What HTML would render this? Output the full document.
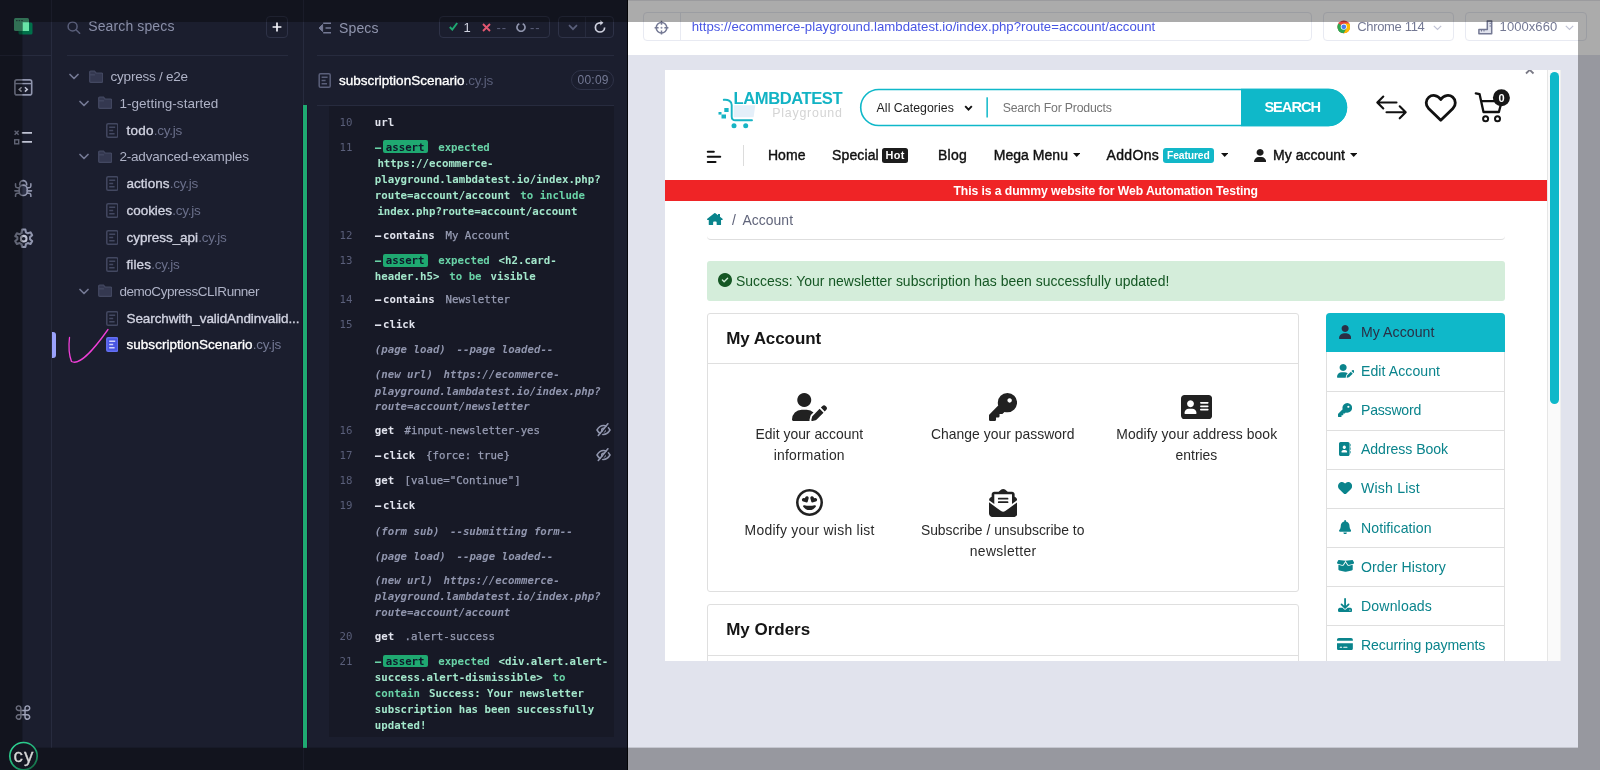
<!DOCTYPE html>
<html lang="en"><head><meta charset="utf-8"><title>Cypress - subscriptionScenario.cy.js</title>
<style>
*{box-sizing:border-box;margin:0;padding:0}
html,body{width:1600px;height:770px;overflow:hidden;background:#1b1e2e}
body{font-family:"Liberation Sans",sans-serif;}
#root{will-change:transform;position:relative;width:1600px;height:770px;overflow:hidden;background:#1b1e2e}
#root div,#root span.t,#root svg{position:absolute}
span.t{white-space:pre;display:block}
.m{font-family:"DejaVu Sans Mono","Liberation Mono",monospace}

</style></head>
<body>
<div id="root">
<div style="left:0px;top:0px;width:52px;height:770px;background:#1b1e2e;"></div>
<div style="left:51px;top:0px;width:1px;height:748px;background:#272b3e;"></div>
<div style="left:0px;top:55px;width:51px;height:1px;background:#272b3e;"></div>
<svg style="left:14px;top:18px;" width="19" height="17" viewBox="0 0 19 17">
<rect x="4.5" y="4.5" width="14" height="12" rx="1.5" fill="#00714a"/>
<rect x="0" y="0" width="15" height="13" rx="1.5" fill="#4aa67e"/>
<rect x="9" y="4.5" width="6" height="8.5" fill="#69e3a7"/>
<rect x="2" y="2" width="1.6" height="1.2" fill="#1b1e2e" opacity=".6"/><rect x="4.6" y="2" width="1.6" height="1.2" fill="#1b1e2e" opacity=".6"/><rect x="7.2" y="2" width="1.6" height="1.2" fill="#1b1e2e" opacity=".6"/>
</svg>
<svg style="left:14px;top:79px;" width="19" height="17" viewBox="0 0 19 17">
<rect x="0.9" y="0.9" width="16.8" height="15" rx="2" fill="none" stroke="#9095ad" stroke-width="1.6"/>
<path d="M1 4.6H17.5" stroke="#9095ad" stroke-width="1.4"/>
<path d="M7.6 8.2 5.2 10.4 7.6 12.6M10.9 8.2 13.3 10.4 10.9 12.6" fill="none" stroke="#c0c3d4" stroke-width="1.5"/>
</svg>
<svg style="left:14px;top:130px;" width="19" height="16" viewBox="0 0 19 16">
<path d="M0.6 0.8 4.6 4.8M4.6 0.8 0.6 4.8" stroke="#9095ad" stroke-width="1.4"/>
<rect x="0.7" y="9.8" width="4" height="4" fill="none" stroke="#9095ad" stroke-width="1.4"/>
<path d="M7.8 2.8H18M7.8 11.8H18" stroke="#c0c3d4" stroke-width="1.7"/>
</svg>
<svg style="left:14.3px;top:178.8px;" width="18.4" height="18.2" viewBox="0 0 19 19">
<path d="M5.900 6.800V5.300a3.600 3.600 0 0 1 7.200 0V6.800" fill="none" stroke="#9095ad" stroke-width="1.700"/>
<rect x="5.300" y="6.400" width="8.400" height="10.800" rx="4" fill="#2e3247" stroke="#9095ad" stroke-width="1.700"/>
<path d="M5.300 9.200H3.300Q1.500 9.200 1.500 7.400V5M5.300 12.400H0.800M5.300 15H3.600Q1.600 15 1.500 17V18.200M13.700 9.200H15.700Q17.500 9.200 17.500 7.400V5M13.700 12.400H18.200M13.700 15H15.400Q17.400 15 17.500 17V18.200" fill="none" stroke="#9095ad" stroke-width="1.600" stroke-linecap="round"/>
</svg>
<svg style="left:11.7px;top:226.6px;" width="23.4" height="23.4" viewBox="0 0 24 24">
<path d="M10.300 2.500h3.400l.6 2.900 1.900 1.100 2.800-1 1.700 3-2.200 1.900v2.200l2.200 1.900-1.700 3-2.800-1-1.900 1.100-.6 2.900h-3.400l-.6-2.900-1.900-1.100-2.800 1-1.700-3 2.200-1.900v-2.200L3.300 9.500l1.700-3 2.800 1 1.900-1.100z" fill="none" stroke="#9095ad" stroke-width="2.100" stroke-linejoin="round"/>
<circle cx="12" cy="12" r="2.900" fill="none" stroke="#c0c3d4" stroke-width="2.100"/>
</svg>
<span class="t" style="left:13.20px;top:700.50px;font-size:19.5px;line-height:25px;color:#9ea2b8;font-family:'DejaVu Sans','Liberation Sans',sans-serif;">⌘</span>
<div style="left:52px;top:0px;width:251px;height:770px;background:#1b1e2e;"></div>
<div style="left:303px;top:0px;width:1px;height:770px;background:#272b3e;"></div>
<div style="left:67px;top:55px;width:221px;height:1px;background:#272b3e;"></div>
<svg style="left:67px;top:20.5px;" width="14" height="13" viewBox="0 0 14 13"><circle cx="5.6" cy="5.4" r="4.5" fill="none" stroke="#5a5f7a" stroke-width="1.5"/><path d="M9 8.8 12.6 12.3" stroke="#5a5f7a" stroke-width="1.6" stroke-linecap="round"/></svg>
<span class="t" style="left:88.20px;top:17.30px;font-size:14px;line-height:18px;color:#8a8fa8;letter-spacing:0.125px;">Search specs</span>
<div style="left:266px;top:16px;width:22px;height:22px;border:1px solid #2e3247;border-radius:4px;"></div>
<svg style="left:272px;top:22px" width="10" height="10" viewBox="0 0 10 10"><path d="M5 0.6V9.4M0.6 5H9.4" stroke="#f3f4fa" stroke-width="1.7"/></svg>
<svg style="left:69px;top:72.9px;" width="10" height="7" viewBox="0 0 10 7"><path d="M1 1.5 5 5.5 9 1.5" fill="none" stroke="#747994" stroke-width="1.7" stroke-linecap="round" stroke-linejoin="round"/></svg>
<svg style="left:88.7px;top:69.60000000000001px;" width="14.4" height="13.3" viewBox="0 0 14.4 13.3"><path d="M0.7 2.2V11.3a1 1 0 0 0 1 1H12.700a1 1 0 0 0 1-1V4.2a1 1 0 0 0-1-1H7.200L5.500 1.200H1.700a1 1 0 0 0-1 1z" fill="#343850" stroke="#434861" stroke-width="1.3"/><path d="M0.7 4.8H6" stroke="#434861" stroke-width="1.3"/></svg>
<span class="t" style="left:110.60px;top:67.90px;font-size:13.5px;line-height:18px;color:#afb3c7;letter-spacing:-0.241px;">cypress / e2e</span>
<svg style="left:78.5px;top:99.75px;" width="10" height="7" viewBox="0 0 10 7"><path d="M1 1.5 5 5.5 9 1.5" fill="none" stroke="#747994" stroke-width="1.7" stroke-linecap="round" stroke-linejoin="round"/></svg>
<svg style="left:97.5px;top:96.45px;" width="14.4" height="13.3" viewBox="0 0 14.4 13.3"><path d="M0.7 2.2V11.3a1 1 0 0 0 1 1H12.700a1 1 0 0 0 1-1V4.2a1 1 0 0 0-1-1H7.200L5.500 1.200H1.700a1 1 0 0 0-1 1z" fill="#343850" stroke="#434861" stroke-width="1.3"/><path d="M0.7 4.8H6" stroke="#434861" stroke-width="1.3"/></svg>
<span class="t" style="left:119.40px;top:94.75px;font-size:13.5px;line-height:18px;color:#afb3c7;letter-spacing:0.043px;">1-getting-started</span>
<svg style="left:105.5px;top:122.60000000000002px;" width="12.6" height="15" viewBox="0 0 12.6 15"><rect x="0.8" y="0.8" width="11" height="13.400" rx="1.3" fill="#1b1e2e" stroke="#434861" stroke-width="1.5"/><path d="M3.200 4.300H9.200M3.200 7.500H7.200M3.200 10.700H8.600" stroke="#434861" stroke-width="1.4"/></svg>
<span class="t" style="left:126.50px;top:121.60px;font-size:13.5px;line-height:18px;color:#d0d2e0;-webkit-text-stroke:0.35px #d0d2e0;letter-spacing:0.240px;">todo</span>
<span class="t" style="left:153.80px;top:121.60px;font-size:13.5px;line-height:18px;color:#6a6f8a;letter-spacing:-0.250px;">.cy.js</span>
<svg style="left:78.5px;top:153.45000000000002px;" width="10" height="7" viewBox="0 0 10 7"><path d="M1 1.5 5 5.5 9 1.5" fill="none" stroke="#747994" stroke-width="1.7" stroke-linecap="round" stroke-linejoin="round"/></svg>
<svg style="left:97.5px;top:150.15px;" width="14.4" height="13.3" viewBox="0 0 14.4 13.3"><path d="M0.7 2.2V11.3a1 1 0 0 0 1 1H12.700a1 1 0 0 0 1-1V4.2a1 1 0 0 0-1-1H7.200L5.500 1.200H1.700a1 1 0 0 0-1 1z" fill="#343850" stroke="#434861" stroke-width="1.3"/><path d="M0.7 4.8H6" stroke="#434861" stroke-width="1.3"/></svg>
<span class="t" style="left:119.40px;top:148.45px;font-size:13.5px;line-height:18px;color:#afb3c7;letter-spacing:-0.185px;">2-advanced-examples</span>
<svg style="left:105.5px;top:176.3px;" width="12.6" height="15" viewBox="0 0 12.6 15"><rect x="0.8" y="0.8" width="11" height="13.400" rx="1.3" fill="#1b1e2e" stroke="#434861" stroke-width="1.5"/><path d="M3.200 4.300H9.200M3.200 7.500H7.200M3.200 10.700H8.600" stroke="#434861" stroke-width="1.4"/></svg>
<span class="t" style="left:126.50px;top:175.30px;font-size:13.5px;line-height:18px;color:#d0d2e0;-webkit-text-stroke:0.35px #d0d2e0;letter-spacing:0.036px;">actions</span>
<span class="t" style="left:169.80px;top:175.30px;font-size:13.5px;line-height:18px;color:#6a6f8a;letter-spacing:-0.250px;">.cy.js</span>
<svg style="left:105.5px;top:203.15px;" width="12.6" height="15" viewBox="0 0 12.6 15"><rect x="0.8" y="0.8" width="11" height="13.400" rx="1.3" fill="#1b1e2e" stroke="#434861" stroke-width="1.5"/><path d="M3.200 4.300H9.200M3.200 7.500H7.200M3.200 10.700H8.600" stroke="#434861" stroke-width="1.4"/></svg>
<span class="t" style="left:126.50px;top:202.15px;font-size:13.5px;line-height:18px;color:#d0d2e0;-webkit-text-stroke:0.35px #d0d2e0;letter-spacing:-0.047px;">cookies</span>
<span class="t" style="left:172.30px;top:202.15px;font-size:13.5px;line-height:18px;color:#6a6f8a;letter-spacing:-0.250px;">.cy.js</span>
<svg style="left:105.5px;top:230.00000000000003px;" width="12.6" height="15" viewBox="0 0 12.6 15"><rect x="0.8" y="0.8" width="11" height="13.400" rx="1.3" fill="#1b1e2e" stroke="#434861" stroke-width="1.5"/><path d="M3.200 4.300H9.200M3.200 7.500H7.200M3.200 10.700H8.600" stroke="#434861" stroke-width="1.4"/></svg>
<span class="t" style="left:126.50px;top:229.00px;font-size:13.5px;line-height:18px;color:#d0d2e0;-webkit-text-stroke:0.35px #d0d2e0;letter-spacing:-0.055px;">cypress_api</span>
<span class="t" style="left:198.30px;top:229.00px;font-size:13.5px;line-height:18px;color:#6a6f8a;letter-spacing:-0.250px;">.cy.js</span>
<svg style="left:105.5px;top:256.85px;" width="12.6" height="15" viewBox="0 0 12.6 15"><rect x="0.8" y="0.8" width="11" height="13.400" rx="1.3" fill="#1b1e2e" stroke="#434861" stroke-width="1.5"/><path d="M3.200 4.300H9.200M3.200 7.500H7.200M3.200 10.700H8.600" stroke="#434861" stroke-width="1.4"/></svg>
<span class="t" style="left:126.50px;top:255.85px;font-size:13.5px;line-height:18px;color:#d0d2e0;-webkit-text-stroke:0.35px #d0d2e0;letter-spacing:0.121px;">files</span>
<span class="t" style="left:151.30px;top:255.85px;font-size:13.5px;line-height:18px;color:#6a6f8a;letter-spacing:-0.250px;">.cy.js</span>
<svg style="left:78.5px;top:287.70000000000005px;" width="10" height="7" viewBox="0 0 10 7"><path d="M1 1.5 5 5.5 9 1.5" fill="none" stroke="#747994" stroke-width="1.7" stroke-linecap="round" stroke-linejoin="round"/></svg>
<svg style="left:97.5px;top:284.40000000000003px;" width="14.4" height="13.3" viewBox="0 0 14.4 13.3"><path d="M0.7 2.2V11.3a1 1 0 0 0 1 1H12.700a1 1 0 0 0 1-1V4.2a1 1 0 0 0-1-1H7.200L5.500 1.200H1.700a1 1 0 0 0-1 1z" fill="#343850" stroke="#434861" stroke-width="1.3"/><path d="M0.7 4.8H6" stroke="#434861" stroke-width="1.3"/></svg>
<span class="t" style="left:119.40px;top:282.70px;font-size:13.5px;line-height:18px;color:#afb3c7;letter-spacing:-0.451px;">demoCypressCLIRunner</span>
<svg style="left:105.5px;top:310.55px;" width="12.6" height="15" viewBox="0 0 12.6 15"><rect x="0.8" y="0.8" width="11" height="13.400" rx="1.3" fill="#1b1e2e" stroke="#434861" stroke-width="1.5"/><path d="M3.200 4.300H9.200M3.200 7.500H7.200M3.200 10.700H8.600" stroke="#434861" stroke-width="1.4"/></svg>
<span class="t" style="left:126.50px;top:309.55px;font-size:13.5px;line-height:18px;color:#d0d2e0;-webkit-text-stroke:0.35px #d0d2e0;letter-spacing:-0.093px;">Searchwith_validAndinvalid...</span>
<svg style="left:105.5px;top:337.4px;" width="12.6" height="15" viewBox="0 0 12.6 15"><rect x="0.8" y="0.8" width="11" height="13.400" rx="1.3" fill="#4956e3" stroke="#6470f3" stroke-width="1.5"/><path d="M3.200 4.300H9.200M3.200 7.500H7.200M3.200 10.700H8.600" stroke="#d0d2fc" stroke-width="1.4"/></svg>
<span class="t" style="left:126.50px;top:336.40px;font-size:13.5px;line-height:18px;color:#ffffff;-webkit-text-stroke:0.35px #ffffff;letter-spacing:0.035px;">subscriptionScenario</span>
<span class="t" style="left:252.80px;top:336.40px;font-size:13.5px;line-height:18px;color:#747994;letter-spacing:-0.250px;">.cy.js</span>
<div style="left:52px;top:332px;width:3.5px;height:26px;background:#9aa2fc;border-radius:0 3px 3px 0;"></div>
<svg style="left:64px;top:324px" width="50" height="44" viewBox="0 0 50 44"><path d="M5.500 13.500C4.500 22 5 31 7.500 37.500 15 41.500 27 29.500 44 5.500" fill="none" stroke="#f03fd8" stroke-width="1.3" stroke-linecap="round"/></svg>
<div style="left:304px;top:0px;width:324px;height:770px;background:#1b1e2e;"></div>
<div style="left:317px;top:55px;width:297px;height:1px;background:#272b3e;"></div>
<div style="left:317px;top:105px;width:297px;height:1px;background:#272b3e;"></div>
<div style="left:302px;top:105px;width:6px;height:643px;background:#1d0f2b;"></div>
<div style="left:303px;top:105px;width:4px;height:643px;background:#1fa971;"></div>
<div style="left:329px;top:106px;width:285px;height:631px;background:#171926;"></div>
<svg style="left:318px;top:22px" width="14" height="12" viewBox="0 0 14 12"><path d="M5.200 1.200H13M7.500 6H13M5.200 10.800H13" stroke="#747994" stroke-width="1.6"/><path d="M4.600 2.500 1 6 4.600 9.500z" fill="#747994" stroke="#747994" stroke-width="1" stroke-linejoin="round"/></svg>
<span class="t" style="left:339.00px;top:18.60px;font-size:14px;line-height:18px;color:#9095ad;letter-spacing:0.145px;">Specs</span>
<div style="left:439px;top:16px;width:111px;height:22px;border:1px solid #2e3247;border-radius:4px;"></div>
<svg style="left:449px;top:22px" width="9" height="9" viewBox="0 0 9 9"><path d="M0.8 5 3.300 7.600 8.200 1" fill="none" stroke="#1fa971" stroke-width="1.9"/></svg>
<span class="t" style="left:463.50px;top:19.00px;font-size:13px;line-height:17px;color:#d0d2e0;letter-spacing:0.000px;">1</span>
<svg style="left:482px;top:22.500px" width="9" height="9" viewBox="0 0 9 9"><path d="M1 1 8 8M8 1 1 8" fill="none" stroke="#e45770" stroke-width="1.9"/></svg>
<span class="t" style="left:496.50px;top:18.50px;font-size:13px;line-height:17px;color:#5a5f7a;letter-spacing:0.828px;">--</span>
<svg style="left:515.500px;top:22px" width="10" height="10" viewBox="0 0 10 10"><path d="M3.300 1.700A4 4 0 1 0 6.700 1.700" fill="none" stroke="#9095ad" stroke-width="1.7"/></svg>
<span class="t" style="left:530.00px;top:18.50px;font-size:13px;line-height:17px;color:#5a5f7a;letter-spacing:0.828px;">--</span>
<div style="left:558px;top:16px;width:56px;height:22px;border:1px solid #2e3247;border-radius:4px;"></div>
<div style="left:585px;top:17px;width:1px;height:20px;background:#272b3e;"></div>
<svg style="left:567.500px;top:24px" width="10" height="7" viewBox="0 0 10 7"><path d="M1 1.200 5 5.200 9 1.200" fill="none" stroke="#5a5f7a" stroke-width="1.7"/></svg>
<svg style="left:593px;top:19.500px" width="14" height="14" viewBox="0 0 14 14"><path d="M11.600 7.400A4.600 4.600 0 1 1 7 2.800H8.500" fill="none" stroke="#d0d2e0" stroke-width="1.7"/><path d="M7.300 0 10.400 2.800 7.300 5.600z" fill="#d0d2e0"/></svg>
<svg style="left:318px;top:72.5px;" width="13.4" height="15" viewBox="0 0 12.6 15"><rect x="0.8" y="0.8" width="11" height="13.400" rx="1.3" fill="#1b1e2e" stroke="#5a5f7a" stroke-width="1.5"/><path d="M3.200 4.300H9.200M3.200 7.500H7.200M3.200 10.700H8.600" stroke="#5a5f7a" stroke-width="1.4"/></svg>
<span class="t" style="left:339.00px;top:71.60px;font-size:13.5px;line-height:18px;color:#ffffff;-webkit-text-stroke:0.35px #ffffff;letter-spacing:0.009px;">subscriptionScenario</span>
<span class="t" style="left:464.80px;top:71.60px;font-size:13.5px;line-height:18px;color:#5a5f7a;letter-spacing:-0.250px;">.cy.js</span>
<div style="left:571px;top:70px;width:43px;height:20px;border:1px solid #2e3247;border-radius:10px;"></div>
<span class="t" style="left:577.50px;top:72.40px;font-size:12px;line-height:16px;color:#747994;letter-spacing:0.242px;">00:09</span>
<span class="t" style="left:339.50px;top:115.50px;font-size:10.73px;line-height:14px;color:#5a5f7a;font-family:'DejaVu Sans Mono','Liberation Mono',monospace;">10</span>
<span class="t" style="left:374.80px;top:115.50px;font-size:10.73px;line-height:14px;color:#e1e3ed;font-family:'DejaVu Sans Mono','Liberation Mono',monospace;font-weight:700;">url</span>
<span class="t" style="left:339.50px;top:140.60px;font-size:10.73px;line-height:14px;color:#5a5f7a;font-family:'DejaVu Sans Mono','Liberation Mono',monospace;">11</span>
<span class="t" style="left:371.60px;top:140.60px;font-size:10.73px;line-height:14px;color:#69d3a7;font-family:'DejaVu Sans Mono','Liberation Mono',monospace;font-weight:700;transform:scaleX(1.880);transform-origin:0 50%;">-</span>
<div style="left:382.5px;top:140.4px;width:45.2px;height:12.8px;background:#1fa971;border-radius:2px;"></div>
<span class="t" style="left:385.80px;top:140.60px;font-size:10.73px;line-height:14px;color:#10172a;font-family:'DejaVu Sans Mono','Liberation Mono',monospace;font-weight:700;">assert</span>
<span class="t" style="left:438.20px;top:140.60px;font-size:10.73px;line-height:14px;color:#69d3a7;font-family:'DejaVu Sans Mono','Liberation Mono',monospace;font-weight:700;">expected</span>
<span class="t" style="left:377.40px;top:157.00px;font-size:10.73px;line-height:14px;color:#a3e7cb;font-family:'DejaVu Sans Mono','Liberation Mono',monospace;font-weight:700;">https://ecommerce-</span>
<span class="t" style="left:374.80px;top:173.10px;font-size:10.73px;line-height:14px;color:#a3e7cb;font-family:'DejaVu Sans Mono','Liberation Mono',monospace;font-weight:700;">playground.lambdatest.io/index.php?</span>
<span class="t" style="left:374.80px;top:189.10px;font-size:10.73px;line-height:14px;color:#a3e7cb;font-family:'DejaVu Sans Mono','Liberation Mono',monospace;font-weight:700;">route=account/account</span>
<span class="t" style="left:520.30px;top:189.10px;font-size:10.73px;line-height:14px;color:#69d3a7;font-family:'DejaVu Sans Mono','Liberation Mono',monospace;font-weight:700;">to include</span>
<span class="t" style="left:377.40px;top:205.20px;font-size:10.73px;line-height:14px;color:#a3e7cb;font-family:'DejaVu Sans Mono','Liberation Mono',monospace;font-weight:700;">index.php?route=account/account</span>
<span class="t" style="left:339.50px;top:228.60px;font-size:10.73px;line-height:14px;color:#5a5f7a;font-family:'DejaVu Sans Mono','Liberation Mono',monospace;">12</span>
<span class="t" style="left:371.60px;top:228.60px;font-size:10.73px;line-height:14px;color:#e1e3ed;font-family:'DejaVu Sans Mono','Liberation Mono',monospace;font-weight:700;transform:scaleX(1.880);transform-origin:0 50%;">-</span>
<span class="t" style="left:383.00px;top:228.60px;font-size:10.73px;line-height:14px;color:#e1e3ed;font-family:'DejaVu Sans Mono','Liberation Mono',monospace;font-weight:700;">contains</span>
<span class="t" style="left:445.50px;top:228.60px;font-size:10.73px;line-height:14px;color:#989db4;font-family:'DejaVu Sans Mono','Liberation Mono',monospace;-webkit-text-stroke:0.25px #989db4;">My Account</span>
<span class="t" style="left:339.50px;top:254.00px;font-size:10.73px;line-height:14px;color:#5a5f7a;font-family:'DejaVu Sans Mono','Liberation Mono',monospace;">13</span>
<span class="t" style="left:371.60px;top:254.00px;font-size:10.73px;line-height:14px;color:#69d3a7;font-family:'DejaVu Sans Mono','Liberation Mono',monospace;font-weight:700;transform:scaleX(1.880);transform-origin:0 50%;">-</span>
<div style="left:382.5px;top:253.8px;width:45.2px;height:12.8px;background:#1fa971;border-radius:2px;"></div>
<span class="t" style="left:385.80px;top:254.00px;font-size:10.73px;line-height:14px;color:#10172a;font-family:'DejaVu Sans Mono','Liberation Mono',monospace;font-weight:700;">assert</span>
<span class="t" style="left:438.20px;top:254.00px;font-size:10.73px;line-height:14px;color:#69d3a7;font-family:'DejaVu Sans Mono','Liberation Mono',monospace;font-weight:700;">expected</span>
<span class="t" style="left:498.60px;top:254.00px;font-size:10.73px;line-height:14px;color:#a3e7cb;font-family:'DejaVu Sans Mono','Liberation Mono',monospace;font-weight:700;">&lt;h2.card-</span>
<span class="t" style="left:374.80px;top:269.60px;font-size:10.73px;line-height:14px;color:#a3e7cb;font-family:'DejaVu Sans Mono','Liberation Mono',monospace;font-weight:700;">header.h5&gt;</span>
<span class="t" style="left:449.30px;top:269.60px;font-size:10.73px;line-height:14px;color:#69d3a7;font-family:'DejaVu Sans Mono','Liberation Mono',monospace;font-weight:700;">to be</span>
<span class="t" style="left:490.50px;top:269.60px;font-size:10.73px;line-height:14px;color:#a3e7cb;font-family:'DejaVu Sans Mono','Liberation Mono',monospace;font-weight:700;">visible</span>
<span class="t" style="left:339.50px;top:293.00px;font-size:10.73px;line-height:14px;color:#5a5f7a;font-family:'DejaVu Sans Mono','Liberation Mono',monospace;">14</span>
<span class="t" style="left:371.60px;top:293.00px;font-size:10.73px;line-height:14px;color:#e1e3ed;font-family:'DejaVu Sans Mono','Liberation Mono',monospace;font-weight:700;transform:scaleX(1.880);transform-origin:0 50%;">-</span>
<span class="t" style="left:383.00px;top:293.00px;font-size:10.73px;line-height:14px;color:#e1e3ed;font-family:'DejaVu Sans Mono','Liberation Mono',monospace;font-weight:700;">contains</span>
<span class="t" style="left:445.50px;top:293.00px;font-size:10.73px;line-height:14px;color:#989db4;font-family:'DejaVu Sans Mono','Liberation Mono',monospace;-webkit-text-stroke:0.25px #989db4;">Newsletter</span>
<span class="t" style="left:339.50px;top:318.20px;font-size:10.73px;line-height:14px;color:#5a5f7a;font-family:'DejaVu Sans Mono','Liberation Mono',monospace;">15</span>
<span class="t" style="left:371.60px;top:318.20px;font-size:10.73px;line-height:14px;color:#e1e3ed;font-family:'DejaVu Sans Mono','Liberation Mono',monospace;font-weight:700;transform:scaleX(1.880);transform-origin:0 50%;">-</span>
<span class="t" style="left:383.00px;top:318.20px;font-size:10.73px;line-height:14px;color:#e1e3ed;font-family:'DejaVu Sans Mono','Liberation Mono',monospace;font-weight:700;">click</span>
<span class="t" style="left:374.80px;top:343.10px;font-size:10.73px;line-height:14px;color:#9095ad;font-family:'DejaVu Sans Mono','Liberation Mono',monospace;font-weight:700;font-style:italic;">(page load)</span>
<span class="t" style="left:456.50px;top:343.10px;font-size:10.73px;line-height:14px;color:#9095ad;font-family:'DejaVu Sans Mono','Liberation Mono',monospace;font-weight:700;font-style:italic;">--page loaded--</span>
<span class="t" style="left:374.80px;top:368.30px;font-size:10.73px;line-height:14px;color:#9095ad;font-family:'DejaVu Sans Mono','Liberation Mono',monospace;font-weight:700;font-style:italic;">(new url)</span>
<span class="t" style="left:443.50px;top:368.30px;font-size:10.73px;line-height:14px;color:#9095ad;font-family:'DejaVu Sans Mono','Liberation Mono',monospace;font-weight:700;font-style:italic;">https://ecommerce-</span>
<span class="t" style="left:374.80px;top:384.80px;font-size:10.73px;line-height:14px;color:#9095ad;font-family:'DejaVu Sans Mono','Liberation Mono',monospace;font-weight:700;font-style:italic;">playground.lambdatest.io/index.php?</span>
<span class="t" style="left:374.80px;top:400.40px;font-size:10.73px;line-height:14px;color:#9095ad;font-family:'DejaVu Sans Mono','Liberation Mono',monospace;font-weight:700;font-style:italic;">route=account/newsletter</span>
<span class="t" style="left:339.50px;top:424.00px;font-size:10.73px;line-height:14px;color:#5a5f7a;font-family:'DejaVu Sans Mono','Liberation Mono',monospace;">16</span>
<span class="t" style="left:374.80px;top:424.00px;font-size:10.73px;line-height:14px;color:#e1e3ed;font-family:'DejaVu Sans Mono','Liberation Mono',monospace;font-weight:700;">get</span>
<span class="t" style="left:404.50px;top:424.00px;font-size:10.73px;line-height:14px;color:#989db4;font-family:'DejaVu Sans Mono','Liberation Mono',monospace;-webkit-text-stroke:0.25px #989db4;">#input-newsletter-yes</span>
<svg style="left:596px;top:423.2px" width="15" height="14" viewBox="0 0 15 14"><path d="M1 7C3 3.600 5.500 2.600 7.500 2.600S12 3.600 14 7C12 10.400 9.500 11.400 7.500 11.400S3 10.400 1 7z" fill="none" stroke="#9095ad" stroke-width="1.500"/><circle cx="7.500" cy="7" r="1.900" fill="none" stroke="#9095ad" stroke-width="1.300"/><path d="M13.200 1.500 3.600 13.200" stroke="#171926" stroke-width="1.600"/><path d="M11.900 0.800 2.300 12.500" stroke="#9095ad" stroke-width="1.600" stroke-linecap="round"/></svg>
<span class="t" style="left:339.50px;top:449.20px;font-size:10.73px;line-height:14px;color:#5a5f7a;font-family:'DejaVu Sans Mono','Liberation Mono',monospace;">17</span>
<span class="t" style="left:371.60px;top:449.20px;font-size:10.73px;line-height:14px;color:#e1e3ed;font-family:'DejaVu Sans Mono','Liberation Mono',monospace;font-weight:700;transform:scaleX(1.880);transform-origin:0 50%;">-</span>
<span class="t" style="left:383.00px;top:449.20px;font-size:10.73px;line-height:14px;color:#e1e3ed;font-family:'DejaVu Sans Mono','Liberation Mono',monospace;font-weight:700;">click</span>
<span class="t" style="left:426.00px;top:449.20px;font-size:10.73px;line-height:14px;color:#989db4;font-family:'DejaVu Sans Mono','Liberation Mono',monospace;-webkit-text-stroke:0.25px #989db4;">{force: true}</span>
<svg style="left:596px;top:448.4px" width="15" height="14" viewBox="0 0 15 14"><path d="M1 7C3 3.600 5.500 2.600 7.500 2.600S12 3.600 14 7C12 10.400 9.500 11.400 7.500 11.400S3 10.400 1 7z" fill="none" stroke="#9095ad" stroke-width="1.500"/><circle cx="7.500" cy="7" r="1.900" fill="none" stroke="#9095ad" stroke-width="1.300"/><path d="M13.200 1.500 3.600 13.200" stroke="#171926" stroke-width="1.600"/><path d="M11.900 0.800 2.300 12.500" stroke="#9095ad" stroke-width="1.600" stroke-linecap="round"/></svg>
<span class="t" style="left:339.50px;top:474.40px;font-size:10.73px;line-height:14px;color:#5a5f7a;font-family:'DejaVu Sans Mono','Liberation Mono',monospace;">18</span>
<span class="t" style="left:374.80px;top:474.40px;font-size:10.73px;line-height:14px;color:#e1e3ed;font-family:'DejaVu Sans Mono','Liberation Mono',monospace;font-weight:700;">get</span>
<span class="t" style="left:404.50px;top:474.40px;font-size:10.73px;line-height:14px;color:#989db4;font-family:'DejaVu Sans Mono','Liberation Mono',monospace;-webkit-text-stroke:0.25px #989db4;">[value=&quot;Continue&quot;]</span>
<span class="t" style="left:339.50px;top:499.40px;font-size:10.73px;line-height:14px;color:#5a5f7a;font-family:'DejaVu Sans Mono','Liberation Mono',monospace;">19</span>
<span class="t" style="left:371.60px;top:499.40px;font-size:10.73px;line-height:14px;color:#e1e3ed;font-family:'DejaVu Sans Mono','Liberation Mono',monospace;font-weight:700;transform:scaleX(1.880);transform-origin:0 50%;">-</span>
<span class="t" style="left:383.00px;top:499.40px;font-size:10.73px;line-height:14px;color:#e1e3ed;font-family:'DejaVu Sans Mono','Liberation Mono',monospace;font-weight:700;">click</span>
<span class="t" style="left:374.80px;top:524.50px;font-size:10.73px;line-height:14px;color:#9095ad;font-family:'DejaVu Sans Mono','Liberation Mono',monospace;font-weight:700;font-style:italic;">(form sub)</span>
<span class="t" style="left:450.00px;top:524.50px;font-size:10.73px;line-height:14px;color:#9095ad;font-family:'DejaVu Sans Mono','Liberation Mono',monospace;font-weight:700;font-style:italic;">--submitting form--</span>
<span class="t" style="left:374.80px;top:549.70px;font-size:10.73px;line-height:14px;color:#9095ad;font-family:'DejaVu Sans Mono','Liberation Mono',monospace;font-weight:700;font-style:italic;">(page load)</span>
<span class="t" style="left:456.50px;top:549.70px;font-size:10.73px;line-height:14px;color:#9095ad;font-family:'DejaVu Sans Mono','Liberation Mono',monospace;font-weight:700;font-style:italic;">--page loaded--</span>
<span class="t" style="left:374.80px;top:574.30px;font-size:10.73px;line-height:14px;color:#9095ad;font-family:'DejaVu Sans Mono','Liberation Mono',monospace;font-weight:700;font-style:italic;">(new url)</span>
<span class="t" style="left:443.50px;top:574.30px;font-size:10.73px;line-height:14px;color:#9095ad;font-family:'DejaVu Sans Mono','Liberation Mono',monospace;font-weight:700;font-style:italic;">https://ecommerce-</span>
<span class="t" style="left:374.80px;top:590.40px;font-size:10.73px;line-height:14px;color:#9095ad;font-family:'DejaVu Sans Mono','Liberation Mono',monospace;font-weight:700;font-style:italic;">playground.lambdatest.io/index.php?</span>
<span class="t" style="left:374.80px;top:606.40px;font-size:10.73px;line-height:14px;color:#9095ad;font-family:'DejaVu Sans Mono','Liberation Mono',monospace;font-weight:700;font-style:italic;">route=account/account</span>
<span class="t" style="left:339.50px;top:630.10px;font-size:10.73px;line-height:14px;color:#5a5f7a;font-family:'DejaVu Sans Mono','Liberation Mono',monospace;">20</span>
<span class="t" style="left:374.80px;top:630.10px;font-size:10.73px;line-height:14px;color:#e1e3ed;font-family:'DejaVu Sans Mono','Liberation Mono',monospace;font-weight:700;">get</span>
<span class="t" style="left:404.50px;top:630.10px;font-size:10.73px;line-height:14px;color:#989db4;font-family:'DejaVu Sans Mono','Liberation Mono',monospace;-webkit-text-stroke:0.25px #989db4;">.alert-success</span>
<span class="t" style="left:339.50px;top:654.80px;font-size:10.73px;line-height:14px;color:#5a5f7a;font-family:'DejaVu Sans Mono','Liberation Mono',monospace;">21</span>
<span class="t" style="left:371.60px;top:654.80px;font-size:10.73px;line-height:14px;color:#69d3a7;font-family:'DejaVu Sans Mono','Liberation Mono',monospace;font-weight:700;transform:scaleX(1.880);transform-origin:0 50%;">-</span>
<div style="left:382.5px;top:654.5999999999999px;width:45.2px;height:12.8px;background:#1fa971;border-radius:2px;"></div>
<span class="t" style="left:385.80px;top:654.80px;font-size:10.73px;line-height:14px;color:#10172a;font-family:'DejaVu Sans Mono','Liberation Mono',monospace;font-weight:700;">assert</span>
<span class="t" style="left:438.20px;top:654.80px;font-size:10.73px;line-height:14px;color:#69d3a7;font-family:'DejaVu Sans Mono','Liberation Mono',monospace;font-weight:700;">expected</span>
<span class="t" style="left:498.60px;top:654.80px;font-size:10.73px;line-height:14px;color:#a3e7cb;font-family:'DejaVu Sans Mono','Liberation Mono',monospace;font-weight:700;">&lt;div.alert.alert-</span>
<span class="t" style="left:374.80px;top:671.20px;font-size:10.73px;line-height:14px;color:#a3e7cb;font-family:'DejaVu Sans Mono','Liberation Mono',monospace;font-weight:700;">success.alert-dismissible&gt;</span>
<span class="t" style="left:552.50px;top:671.20px;font-size:10.73px;line-height:14px;color:#69d3a7;font-family:'DejaVu Sans Mono','Liberation Mono',monospace;font-weight:700;">to</span>
<span class="t" style="left:374.80px;top:687.30px;font-size:10.73px;line-height:14px;color:#69d3a7;font-family:'DejaVu Sans Mono','Liberation Mono',monospace;font-weight:700;">contain</span>
<span class="t" style="left:429.00px;top:687.30px;font-size:10.73px;line-height:14px;color:#a3e7cb;font-family:'DejaVu Sans Mono','Liberation Mono',monospace;font-weight:700;">Success: Your newsletter</span>
<span class="t" style="left:374.80px;top:703.40px;font-size:10.73px;line-height:14px;color:#a3e7cb;font-family:'DejaVu Sans Mono','Liberation Mono',monospace;font-weight:700;">subscription has been successfully</span>
<span class="t" style="left:374.80px;top:719.40px;font-size:10.73px;line-height:14px;color:#a3e7cb;font-family:'DejaVu Sans Mono','Liberation Mono',monospace;font-weight:700;">updated!</span>
<div style="left:628px;top:0px;width:972px;height:770px;background:#e1e3ed;"></div>
<div style="left:627px;top:0px;width:1px;height:770px;background:#05060a;"></div>
<div style="left:628px;top:0px;width:972px;height:55px;background:#ffffff;"></div>
<div style="left:643px;top:12px;width:669px;height:29px;border:1px solid #e8eaf2;border-radius:4px;"></div>
<div style="left:680px;top:13px;width:1px;height:27px;background:#e8eaf2;"></div>
<svg style="left:654px;top:20px" width="15" height="15" viewBox="0 0 15 15"><circle cx="7.500" cy="7.700" r="5.300" fill="none" stroke="#747994" stroke-width="1.500"/><path d="M7.500 0.800V4.800M7.500 10.600V14.600M0.600 7.700H4.600M10.400 7.700H14.400" stroke="#747994" stroke-width="1.500"/><circle cx="7.500" cy="7.700" r="1" fill="#9095ad"/></svg>
<span class="t" style="left:691.70px;top:18.30px;font-size:13.2px;line-height:17px;color:#4956e3;letter-spacing:0.018px;">https://ecommerce-playground.lambdatest.io/index.php?route=account/account</span>
<div style="left:1323px;top:12px;width:131px;height:29px;border:1px solid #e8eaf2;border-radius:4px;"></div>
<svg style="left:1336.700px;top:20px" width="13.600" height="13.600" viewBox="0 0 16 16">
<circle cx="8" cy="8" r="7.500" fill="#e8453c"/>
<path d="M8 8 1.500 4.250A7.500 7.500 0 0 0 4.250 14.500L8 8z" fill="#2da94f"/>
<path d="M1.500 11.750A7.500 7.500 0 0 0 8 15.500L11.600 9.300 8 8z" fill="#2da94f"/>
<path d="M8 15.500A7.500 7.500 0 0 0 14.500 4.250H8L11.250 9.870z" fill="#fdbd00"/>
<circle cx="8" cy="8" r="3.600" fill="#fff"/><circle cx="8" cy="8" r="2.800" fill="#4a7df0"/></svg>
<span class="t" style="left:1357.30px;top:18.20px;font-size:13px;line-height:17px;color:#747994;letter-spacing:-0.342px;">Chrome 114</span>
<svg style="left:1433px;top:24.500px" width="9" height="6" viewBox="0 0 9 6"><path d="M0.800 0.800 4.500 4.500 8.200 0.800" fill="none" stroke="#bfc2d4" stroke-width="1.200"/></svg>
<div style="left:1465px;top:12px;width:122px;height:29px;border:1px solid #e8eaf2;border-radius:4px;"></div>
<svg style="left:1477.500px;top:19.500px" width="15" height="15" viewBox="0 0 15 15"><path d="M9.300 1H13.700V13.800H0.900V9.400H9.300z" fill="#e1e3ed" stroke="#747994" stroke-width="1.500" stroke-linejoin="round"/><path d="M3.500 9.500V11.500M6 9.500V11.500M11.500 3.300H13M11.500 6H13" stroke="#747994" stroke-width="1"/></svg>
<span class="t" style="left:1499.60px;top:18.10px;font-size:13px;line-height:17px;color:#747994;letter-spacing:0.068px;">1000x660</span>
<svg style="left:1565px;top:24.500px" width="9" height="6" viewBox="0 0 9 6"><path d="M0.800 0.800 4.500 4.500 8.200 0.800" fill="none" stroke="#bfc2d4" stroke-width="1.200"/></svg>
<div id="aut" style="left:665px;top:70px;width:896px;height:591px;background:#fff;overflow:hidden">
<svg style="left:52.5px;top:28px;" width="38.5" height="30.5" viewBox="0 0 38.5 30.5">
<path d="M15.600 7.300H37.300L35.600 19.200H15.600z" fill="#e4eff9"/>
<path d="M5.800 1.800C10.500 1.400 13.700 3.300 13.700 7V18.500C13.700 21 15 22.300 17.500 22.300H34" fill="none" stroke="#17b4c4" stroke-width="1.900" stroke-linecap="round"/>
<circle cx="16" cy="27.700" r="2.500" fill="#17b4c4"/><circle cx="27.700" cy="27.700" r="2.500" fill="#17b4c4"/>
<rect x="0.500" y="14" width="3" height="2.600" fill="#17b4c4"/><rect x="6.300" y="10" width="4.300" height="4" fill="#17b4c4"/><rect x="3.500" y="16.500" width="4.500" height="4" fill="#17b4c4"/>
</svg>
<span class="t" style="left:68.60px;top:18.10px;font-size:16.6px;line-height:22px;color:#12b3c4;font-weight:700;letter-spacing:-0.453px;">LAMBDATEST</span>
<span class="t" style="left:107.20px;top:35.20px;font-size:12.4px;line-height:16px;color:#d4d4d4;letter-spacing:0.779px;">Playground</span>
<svg style="left:194px;top:18px;" width="489" height="39" viewBox="0 0 489 39"><rect x="1.700" y="1.500" width="485.600" height="36" rx="18" fill="#fff" stroke="#0fb8c9" stroke-width="1.600"/></svg>
<span class="t" style="left:211.60px;top:29.60px;font-size:12.3px;line-height:16px;color:#1f1f1f;letter-spacing:0.049px;">All Categories</span>
<svg style="left:299px;top:35px;" width="9" height="6.5" viewBox="0 0 9 6.500"><path d="M1.200 1.200 4.500 4.700 7.800 1.200" fill="none" stroke="#111" stroke-width="1.900"/></svg>
<svg style="left:320px;top:27px;" width="4" height="21" viewBox="0 0 4 21"><rect x="1.400" y="0.300" width="1.500" height="20.200" fill="#0fb8c9"/></svg>
<span class="t" style="left:337.70px;top:29.60px;font-size:12.3px;line-height:16px;color:#757575;letter-spacing:-0.199px;">Search For Products</span>
<svg style="left:576px;top:18px;" width="107" height="39" viewBox="0 0 107 39"><path d="M0 0.700H87.500A18.800 18.800 0 0 1 87.500 38.300H0z" fill="#0fb8c9"/></svg>
<span class="t" style="left:599.40px;top:28.20px;font-size:14.6px;line-height:19px;color:#ffffff;font-weight:700;letter-spacing:-1.005px;">SEARCH</span>
<svg style="left:710px;top:25px;" width="33" height="26" viewBox="0 0 33 26"><path d="M21.500 7.500H2.500M8.300 1.500 2.300 7.500 8.300 13.500M11.500 17.300H30.500M24.700 11.300 30.700 17.300 24.700 23.300" fill="none" stroke="#111" stroke-width="2.100" stroke-linecap="round" stroke-linejoin="round"/></svg>
<svg style="left:759px;top:22.5px;" width="33.5" height="30" viewBox="0 0 33.500 30"><path d="M16.750 27.300 4.600 15.600C1.300 12.300 1.500 7 4.800 4.200 8.300 1.300 13.600 2 16.750 6.500 19.900 2 25.200 1.300 28.700 4.200 32 7 32.200 12.300 28.900 15.600z" fill="none" stroke="#111" stroke-width="2.800" stroke-linejoin="round"/></svg>
<svg style="left:809px;top:18px;" width="38" height="36" viewBox="0 0 38 36"><path d="M1.800 5.300 5.600 6.200 9.500 24H24.900L27.700 13.200H8" fill="none" stroke="#111" stroke-width="2.300" stroke-linejoin="round" stroke-linecap="round"/><circle cx="11.600" cy="30.700" r="2.500" fill="none" stroke="#111" stroke-width="2"/><circle cx="23.500" cy="30.700" r="2.500" fill="none" stroke="#111" stroke-width="2"/><circle cx="27.400" cy="9.700" r="8.500" fill="#161616"/></svg>
<span class="t" style="left:833.50px;top:21.00px;font-size:11px;line-height:14px;color:#ffffff;font-weight:700;">0</span>
<svg style="left:41px;top:79.5px;" width="16" height="14" viewBox="0 0 16 14"><path d="M1.800 1.800H7.800M1.800 6.800H14.200M1.800 12H9.500" stroke="#111" stroke-width="2.100" stroke-linecap="round"/></svg>
<div style="left:78px;top:75px;width:1px;height:21px;background:#dcdcdc;"></div>
<span class="t" style="left:102.90px;top:76.00px;font-size:14.0px;line-height:18px;color:#101010;-webkit-text-stroke:0.4px #101010;letter-spacing:0.114px;">Home</span>
<span class="t" style="left:167.00px;top:76.00px;font-size:14.0px;line-height:18px;color:#101010;-webkit-text-stroke:0.4px #101010;letter-spacing:0.130px;">Special</span>
<div style="left:217.20000000000005px;top:78px;width:25.6px;height:14.8px;background:#1c1c1c;border-radius:2.500px;"></div>
<span class="t" style="left:220.60px;top:78.30px;font-size:10.9px;line-height:14px;color:#ffffff;font-weight:700;letter-spacing:0.322px;">Hot</span>
<span class="t" style="left:272.90px;top:76.00px;font-size:14.0px;line-height:18px;color:#101010;-webkit-text-stroke:0.4px #101010;letter-spacing:0.323px;">Blog</span>
<span class="t" style="left:328.70px;top:76.00px;font-size:14.0px;line-height:18px;color:#101010;-webkit-text-stroke:0.4px #101010;letter-spacing:0.045px;">Mega Menu</span>
<svg style="left:408px;top:83px;" width="7.4" height="4" viewBox="0 0 7.400 4"><path d="M0 0H7.400L3.700 4z" fill="#111"/></svg>
<span class="t" style="left:441.50px;top:76.00px;font-size:14.0px;line-height:18px;color:#101010;-webkit-text-stroke:0.4px #101010;letter-spacing:0.341px;">AddOns</span>
<div style="left:497.5px;top:78px;width:51px;height:15px;background:#12b7c8;border-radius:3px;"></div>
<span class="t" style="left:502.00px;top:79.30px;font-size:10.3px;line-height:13px;color:#ffffff;font-weight:700;letter-spacing:-0.114px;">Featured</span>
<svg style="left:555.5999999999999px;top:83px;" width="7.4" height="4" viewBox="0 0 7.400 4"><path d="M0 0H7.400L3.700 4z" fill="#111"/></svg>
<svg style="left:589.00px;top:78.50px;" width="12.20" height="13.60" viewBox="0.0 -448.0 448.0 512.0" preserveAspectRatio="none"><path transform="scale(1,-1)" fill="#1c1c1c" d="M224 192Q259 192 288 209Q317 226 335 256Q352 286 352 320Q352 354 335 384Q317 414 288 431Q259 448 224 448Q189 448 160 431Q131 414 113 384Q96 354 96 320Q96 286 113 256Q131 226 160 209Q189 192 224 192ZM178 144Q103 142 52 92Q2 41 0 -34Q0 -47 9 -55Q17 -64 30 -64H418Q431 -64 439 -55Q448 -47 448 -34Q446 41 396 92Q345 142 270 144H178Z"/></svg>
<span class="t" style="left:608.00px;top:76.00px;font-size:14.0px;line-height:18px;color:#101010;-webkit-text-stroke:0.4px #101010;letter-spacing:0.045px;">My account</span>
<svg style="left:684.7px;top:83px;" width="7.4" height="4" viewBox="0 0 7.400 4"><path d="M0 0H7.400L3.700 4z" fill="#111"/></svg>
<div style="left:0px;top:110px;width:882px;height:21px;background:#ef2426;"></div>
<span class="t" style="left:288.50px;top:113.30px;font-size:12.2px;line-height:16px;color:#ffffff;font-weight:700;letter-spacing:-0.083px;">This is a dummy website for Web Automation Testing</span>
<svg style="left:42.00px;top:142.90px;" width="15.80" height="12.50" viewBox="0.0 -448.1 576.1 512.1" preserveAspectRatio="none"><path transform="scale(1,-1)" fill="#0a848c" d="M576 192Q575 179 566 170Q557 161 544 160H512L513 0Q512 -4 512 -8V-24Q512 -41 500 -52Q489 -64 472 -64H456Q454 -64 453 -64Q451 -64 449 -64H416H392Q375 -64 364 -52Q352 -41 352 -24V0V64Q352 78 343 87Q334 96 320 96H256Q242 96 233 87Q224 78 224 64V0V-24Q224 -41 212 -52Q201 -64 184 -64H160H128Q127 -64 126 -64Q125 -64 124 -64Q122 -64 120 -64H104Q87 -64 76 -52Q64 -41 64 -24V88Q64 89 64 91V160H32Q18 161 9 170Q0 179 0 192Q0 206 10 216L266 440Q277 449 288 448Q300 448 309 441L565 216Q577 206 576 192Z"/></svg>
<div style="left:53.39999999999998px;top:143.6px;width:2px;height:4.5px;background:#0a848c;"></div>
<span class="t" style="left:67.00px;top:140.70px;font-size:13.9px;line-height:18px;color:#61657b;letter-spacing:0.000px;">/</span>
<span class="t" style="left:77.50px;top:140.70px;font-size:13.9px;line-height:18px;color:#61657b;letter-spacing:0.049px;">Account</span>
<div style="left:42px;top:160px;width:798px;height:10px;border-bottom:1px solid #dedede;border-radius:0 0 4px 4px;"></div>
<div style="left:42px;top:191px;width:798px;height:40px;background:#d4edda;border-radius:3px;"></div>
<svg style="left:53.00px;top:203.00px;" width="14.00" height="14.00" viewBox="0.0 -448.0 512.0 512.0" preserveAspectRatio="none"><path transform="scale(1,-1)" fill="#155724" d="M256 -64Q326 -63 384 -30Q442 4 478 64Q512 125 512 192Q512 259 478 320Q442 380 384 414Q326 447 256 448Q186 447 128 414Q70 380 34 320Q0 259 0 192Q0 125 34 64Q70 4 128 -30Q186 -63 256 -64ZM369 239 241 111 369 239 241 111Q224 97 207 111L143 175Q129 192 143 209Q160 223 177 209L224 162L335 273Q352 287 369 273Q383 256 369 239Z"/></svg>
<span class="t" style="left:70.90px;top:201.60px;font-size:13.95px;line-height:18px;color:#155724;letter-spacing:0.016px;">Success: Your newsletter subscription has been successfully updated!</span>
<div style="left:42px;top:243px;width:592px;height:279px;background:#fff;border:1px solid #dfdfdf;border-radius:3px;"></div>
<div style="left:43px;top:293px;width:590px;height:1px;background:#dfdfdf;"></div>
<span class="t" style="left:61.20px;top:257.80px;font-size:17.0px;line-height:22px;color:#151515;font-weight:700;letter-spacing:-0.080px;">My Account</span>
<svg style="left:126.50px;top:322.90px;" width="35.00" height="28.10" viewBox="0.0 -448.0 640.0 512.0" preserveAspectRatio="none"><path transform="scale(1,-1)" fill="#212121" d="M224 192Q259 192 288 209Q317 226 335 256Q352 286 352 320Q352 354 335 384Q317 414 288 431Q259 448 224 448Q189 448 160 431Q131 414 113 384Q96 354 96 320Q96 286 113 256Q131 226 160 209Q189 192 224 192ZM178 144Q103 142 52 92Q2 41 0 -34Q0 -47 9 -55Q17 -64 30 -64H323Q318 -51 321 -36L336 24Q341 41 353 54L393 94Q344 142 270 144H178ZM614 212Q601 224 586 224Q570 224 557 212L528 183L599 112L628 141Q640 154 640 170Q640 186 628 198L614 212ZM376 31Q370 25 368 16L353 -44Q351 -53 357 -59Q363 -65 372 -63L432 -48Q441 -46 447 -40L576 89L505 160L376 31Z"/></svg>
<svg style="left:323.75px;top:322.90px;" width="28.10" height="28.10" viewBox="0.0 -448.0 512.0 512.0" preserveAspectRatio="none"><path transform="scale(1,-1)" fill="#212121" d="M336 96Q411 98 460 148Q510 197 512 272Q510 347 460 396Q411 446 336 448Q261 446 212 396Q162 347 160 272Q160 244 168 218L7 57Q0 50 0 40V-40Q2 -62 24 -64H104Q126 -62 128 -40V0H168Q190 2 192 24V64H232Q242 64 249 71L282 104Q308 96 336 96ZM376 352Q399 351 411 332Q421 312 411 292Q399 273 376 272Q353 273 341 292Q331 312 341 332Q353 351 376 352Z"/></svg>
<svg style="left:516.00px;top:324.75px;" width="31.10" height="24.25" viewBox="0.0 -416.0 576.0 448.0" preserveAspectRatio="none"><path transform="scale(1,-1)" fill="#212121" d="M64 416Q37 415 19 397Q1 379 0 352V32Q1 5 19 -13Q37 -31 64 -32H512Q539 -31 557 -13Q575 5 576 32V352Q575 379 557 397Q539 415 512 416H64ZM144 160H208H144H208Q242 159 265 137Q287 114 288 80Q287 65 272 64H80Q65 65 64 80Q65 114 87 137Q110 159 144 160ZM112 256Q113 292 144 311Q176 329 208 311Q239 292 240 256Q239 220 208 201Q176 183 144 201Q113 220 112 256ZM368 288H496H368H496Q511 287 512 272Q511 257 496 256H368Q353 257 352 272Q353 287 368 288ZM368 224H496H368H496Q511 223 512 208Q511 193 496 192H368Q353 193 352 208Q353 223 368 224ZM368 160H496H368H496Q511 159 512 144Q511 129 496 128H368Q353 129 352 144Q353 159 368 160Z"/></svg>
<svg style="left:130.90px;top:419.10px;" width="27.00" height="27.00" viewBox="0.0 -448.0 512.0 512.0" preserveAspectRatio="none"><path transform="scale(1,-1)" fill="#212121" d="M464 192Q464 249 436 296Q409 343 360 372Q311 400 256 400Q201 400 152 372Q103 343 76 296Q48 249 48 192Q48 135 76 88Q103 41 152 12Q201 -16 256 -16Q311 -16 360 12Q409 41 436 88Q464 135 464 192ZM0 192Q1 262 34 320Q68 378 128 414Q189 448 256 448Q323 448 384 414Q444 378 478 320Q511 262 512 192Q511 122 478 64Q444 6 384 -30Q323 -64 256 -64Q189 -64 128 -30Q68 6 34 64Q1 122 0 192ZM350 140Q364 142 373 133Q382 124 375 111Q356 83 325 65Q294 48 256 48Q218 48 187 65Q156 83 137 111Q130 124 139 133Q147 142 162 140Q206 129 256 129Q306 129 350 140ZM215 311Q229 307 236 295Q242 284 239 270L222 205Q216 191 202 194L137 211Q123 215 117 227Q110 238 113 252Q117 266 129 272Q140 279 154 276L170 271L174 287Q178 301 190 308Q201 314 215 311ZM338 287 342 271 338 287 342 271 358 275Q372 279 383 272Q395 266 399 252Q402 238 395 227Q389 215 375 211L310 194Q296 191 290 205L273 270Q270 284 276 295Q283 307 297 311Q310 314 322 307Q334 301 338 287Z"/></svg>
<svg style="left:323.75px;top:418.90px;" width="28.30" height="28.10" viewBox="0.0 -448.0 512.0 512.0" preserveAspectRatio="none"><path transform="scale(1,-1)" fill="#212121" d="M215 352H144H215H96V343V304V264V175L0 245Q3 274 26 291L48 308V352Q49 372 62 386Q76 399 96 400H173L223 437Q237 448 256 448Q275 448 290 437L339 400H416Q436 399 450 386Q463 372 464 352V308L486 291Q509 274 512 245L416 175V264V304V343V352H404ZM0 0V206V0V206L218 45Q235 32 256 32Q277 32 294 45L512 206V0Q511 -27 493 -45Q475 -63 448 -64H64Q37 -63 19 -45Q1 -27 0 0ZM176 288H336H176H336Q351 287 352 272Q351 257 336 256H176Q161 257 160 272Q161 287 176 288ZM176 224H336H176H336Q351 223 352 208Q351 193 336 192H176Q161 193 160 208Q161 223 176 224Z"/></svg>
<span class="t" style="left:90.60px;top:354.80px;font-size:13.9px;line-height:18px;color:#2a2a2a;letter-spacing:0.011px;">Edit your account</span>
<span class="t" style="left:108.75px;top:376.05px;font-size:13.9px;line-height:18px;color:#2a2a2a;letter-spacing:0.213px;">information</span>
<span class="t" style="left:266.00px;top:354.80px;font-size:13.9px;line-height:18px;color:#2a2a2a;letter-spacing:0.028px;">Change your password</span>
<span class="t" style="left:451.25px;top:354.80px;font-size:13.9px;line-height:18px;color:#2a2a2a;letter-spacing:0.078px;">Modify your address book</span>
<span class="t" style="left:510.60px;top:376.05px;font-size:13.9px;line-height:18px;color:#2a2a2a;letter-spacing:-0.009px;">entries</span>
<span class="t" style="left:79.60px;top:450.80px;font-size:13.9px;line-height:18px;color:#2a2a2a;letter-spacing:0.276px;">Modify your wish list</span>
<span class="t" style="left:255.90px;top:450.80px;font-size:13.9px;line-height:18px;color:#2a2a2a;letter-spacing:-0.008px;">Subscribe / unsubscribe to</span>
<span class="t" style="left:304.75px;top:472.05px;font-size:13.9px;line-height:18px;color:#2a2a2a;letter-spacing:0.354px;">newsletter</span>
<div style="left:42px;top:534px;width:592px;height:80px;background:#fff;border:1px solid #dfdfdf;border-radius:3px;"></div>
<div style="left:43px;top:584.5px;width:590px;height:1px;background:#dfdfdf;"></div>
<span class="t" style="left:61.20px;top:549.20px;font-size:17.0px;line-height:22px;color:#151515;font-weight:700;letter-spacing:-0.012px;">My Orders</span>
<div style="left:661px;top:242.89999999999998px;width:179px;height:356.63px;background:#fff;border:1px solid #dfdfdf;border-radius:4px;"></div>
<div style="left:661px;top:242.89999999999998px;width:179px;height:39.37px;background:#0fb8c9;border-radius:4px 4px 0 0;"></div>
<div style="left:662px;top:320.73999999999995px;width:177px;height:1px;background:#dfdfdf;"></div>
<div style="left:662px;top:359.81px;width:177px;height:1px;background:#dfdfdf;"></div>
<div style="left:662px;top:398.87999999999994px;width:177px;height:1px;background:#dfdfdf;"></div>
<div style="left:662px;top:437.95px;width:177px;height:1px;background:#dfdfdf;"></div>
<div style="left:662px;top:477.02px;width:177px;height:1px;background:#dfdfdf;"></div>
<div style="left:662px;top:516.09px;width:177px;height:1px;background:#dfdfdf;"></div>
<div style="left:662px;top:555.1600000000001px;width:177px;height:1px;background:#dfdfdf;"></div>
<svg style="left:674.00px;top:254.75px;" width="12.25" height="14.00" viewBox="0.0 -448.0 448.0 512.0" preserveAspectRatio="none"><path transform="scale(1,-1)" fill="#2a2f45" d="M224 192Q259 192 288 209Q317 226 335 256Q352 286 352 320Q352 354 335 384Q317 414 288 431Q259 448 224 448Q189 448 160 431Q131 414 113 384Q96 354 96 320Q96 286 113 256Q131 226 160 209Q189 192 224 192ZM178 144Q103 142 52 92Q2 41 0 -34Q0 -47 9 -55Q17 -64 30 -64H418Q431 -64 439 -55Q448 -47 448 -34Q446 41 396 92Q345 142 270 144H178Z"/></svg>
<span class="t" style="left:696.00px;top:253.20px;font-size:14.1px;line-height:18px;color:#2a2f45;letter-spacing:0.060px;">My Account</span>
<svg style="left:671.50px;top:294.00px;" width="17.50" height="13.75" viewBox="0.0 -448.0 640.0 512.0" preserveAspectRatio="none"><path transform="scale(1,-1)" fill="#0a848c" d="M224 192Q259 192 288 209Q317 226 335 256Q352 286 352 320Q352 354 335 384Q317 414 288 431Q259 448 224 448Q189 448 160 431Q131 414 113 384Q96 354 96 320Q96 286 113 256Q131 226 160 209Q189 192 224 192ZM178 144Q103 142 52 92Q2 41 0 -34Q0 -47 9 -55Q17 -64 30 -64H323Q318 -51 321 -36L336 24Q341 41 353 54L393 94Q344 142 270 144H178ZM614 212Q601 224 586 224Q570 224 557 212L528 183L599 112L628 141Q640 154 640 170Q640 186 628 198L614 212ZM376 31Q370 25 368 16L353 -44Q351 -53 357 -59Q363 -65 372 -63L432 -48Q441 -46 447 -40L576 89L505 160L376 31Z"/></svg>
<span class="t" style="left:696.00px;top:292.27px;font-size:14.1px;line-height:18px;color:#0a848c;letter-spacing:0.058px;">Edit Account</span>
<svg style="left:673.10px;top:332.90px;" width="14.15" height="14.10" viewBox="0.0 -448.0 512.0 512.0" preserveAspectRatio="none"><path transform="scale(1,-1)" fill="#0a848c" d="M336 96Q411 98 460 148Q510 197 512 272Q510 347 460 396Q411 446 336 448Q261 446 212 396Q162 347 160 272Q160 244 168 218L7 57Q0 50 0 40V-40Q2 -62 24 -64H104Q126 -62 128 -40V0H168Q190 2 192 24V64H232Q242 64 249 71L282 104Q308 96 336 96ZM376 352Q399 351 411 332Q421 312 411 292Q399 273 376 272Q353 273 341 292Q331 312 341 332Q353 351 376 352Z"/></svg>
<span class="t" style="left:696.00px;top:331.34px;font-size:14.1px;line-height:18px;color:#0a848c;letter-spacing:-0.234px;">Password</span>
<svg style="left:674.00px;top:372.00px;" width="12.25" height="14.00" viewBox="32.0 -448.0 480.0 512.0" preserveAspectRatio="none"><path transform="scale(1,-1)" fill="#0a848c" d="M96 448Q69 447 51 429Q33 411 32 384V0Q33 -27 51 -45Q69 -63 96 -64H384Q411 -63 429 -45Q447 -27 448 0V384Q447 411 429 429Q411 447 384 448H96ZM208 160H272H208H272Q306 159 329 137Q351 114 352 80Q351 65 336 64H144Q129 65 128 80Q129 114 151 137Q174 159 208 160ZM176 256Q177 292 208 311Q240 329 272 311Q303 292 304 256Q303 220 272 201Q240 183 208 201Q177 220 176 256ZM512 368Q511 383 496 384Q481 383 480 368V304Q481 289 496 288Q511 289 512 304V368ZM496 256Q481 255 480 240V176Q481 161 496 160Q511 161 512 176V240Q511 255 496 256ZM512 112Q511 127 496 128Q481 127 480 112V48Q481 33 496 32Q511 33 512 48V112Z"/></svg>
<span class="t" style="left:696.00px;top:370.41px;font-size:14.1px;line-height:18px;color:#0a848c;letter-spacing:-0.059px;">Address Book</span>
<svg style="left:673.10px;top:412.00px;" width="14.15" height="12.40" viewBox="0.0 -405.7 512.0 437.7" preserveAspectRatio="none"><path transform="scale(1,-1)" fill="#0a848c" d="M48 148 228 -21 48 148 228 -21Q240 -32 256 -32Q272 -32 284 -21L464 148Q511 192 512 257V263Q511 317 478 355Q445 394 393 404Q358 409 325 399Q293 389 268 364L256 352L244 364Q219 389 187 399Q154 409 119 404Q67 394 34 355Q1 317 0 263V257Q1 192 48 148Z"/></svg>
<span class="t" style="left:696.00px;top:409.48px;font-size:14.1px;line-height:18px;color:#0a848c;letter-spacing:0.197px;">Wish List</span>
<svg style="left:674.00px;top:449.75px;" width="12.25" height="14.35" viewBox="-0.0 -448.0 448.1 512.0" preserveAspectRatio="none"><path transform="scale(1,-1)" fill="#0a848c" d="M224 448Q210 448 201 439Q192 430 192 416V397Q136 385 101 342Q65 299 64 240V221Q63 149 16 94L8 85Q-5 70 3 51Q12 33 32 32H416Q436 33 445 51Q453 70 440 85L433 94Q385 148 384 221V240Q383 299 347 342Q312 385 256 397V416Q256 430 247 439Q238 448 224 448ZM269 -45Q288 -26 288 0H224H160Q160 -26 179 -45Q198 -64 224 -64Q250 -64 269 -45Z"/></svg>
<span class="t" style="left:696.00px;top:448.55px;font-size:14.1px;line-height:18px;color:#0a848c;letter-spacing:0.071px;">Notification</span>
<svg style="left:671.90px;top:489.90px;" width="17.10" height="11.85" viewBox="14.0 -415.0 612.0 445.0" preserveAspectRatio="none"><path transform="scale(1,-1)" fill="#0a848c" d="M59 406Q64 415 75 415L320 384L565 415Q576 415 581 406L623 322Q629 308 623 295Q618 282 603 277L440 231Q417 226 403 245L320 384L237 245Q223 226 200 231L37 277Q22 282 17 295Q11 308 17 322L59 406ZM321 320 376 229 321 320 376 229Q388 210 407 202Q427 194 449 200L576 236V69Q576 53 566 40Q556 27 540 23L335 -28Q320 -32 304 -28L100 23Q84 27 74 40Q64 53 64 69V236L192 200Q213 194 233 202Q252 210 264 229L319 320H321Z"/></svg>
<span class="t" style="left:696.00px;top:487.62px;font-size:14.1px;line-height:18px;color:#0a848c;letter-spacing:0.092px;">Order History</span>
<svg style="left:673.10px;top:527.75px;" width="14.15" height="14.35" viewBox="0.0 -448.0 512.0 512.0" preserveAspectRatio="none"><path transform="scale(1,-1)" fill="#0a848c" d="M288 416Q288 430 279 439Q270 448 256 448Q242 448 233 439Q224 430 224 416V173L151 247Q141 256 128 256Q115 256 105 247Q96 237 96 224Q96 211 105 201L233 73Q243 64 256 64Q269 64 279 73L407 201Q416 211 416 224Q416 237 407 247Q397 256 384 256Q371 256 361 247L288 173V416ZM64 96Q37 95 19 77Q1 59 0 32V0Q1 -27 19 -45Q37 -63 64 -64H448Q475 -63 493 -45Q511 -27 512 0V32Q511 59 493 77Q475 95 448 96H347L301 51Q281 32 256 32Q230 32 211 51L166 96H64ZM432 40Q454 38 456 16Q454 -6 432 -8Q410 -6 408 16Q410 38 432 40Z"/></svg>
<span class="t" style="left:696.00px;top:526.69px;font-size:14.1px;line-height:18px;color:#0a848c;letter-spacing:0.146px;">Downloads</span>
<svg style="left:672.25px;top:568.10px;" width="15.85" height="12.30" viewBox="0.0 -416.0 576.0 448.0" preserveAspectRatio="none"><path transform="scale(1,-1)" fill="#0a848c" d="M64 416Q37 415 19 397Q1 379 0 352V320H576V352Q575 379 557 397Q539 415 512 416H64ZM576 224H0H576H0V32Q1 5 19 -13Q37 -31 64 -32H512Q539 -31 557 -13Q575 5 576 32V224ZM112 96H176H112H176Q191 95 192 80Q191 65 176 64H112Q97 65 96 80Q97 95 112 96ZM224 80Q225 95 240 96H368Q383 95 384 80Q383 65 368 64H240Q225 65 224 80Z"/></svg>
<span class="t" style="left:696.00px;top:565.76px;font-size:14.1px;line-height:18px;color:#0a848c;letter-spacing:-0.101px;">Recurring payments</span>
<div style="left:882px;top:0px;width:14px;height:591px;background:#fafafa;box-shadow:inset 1px 0 0 #e6e6e6, inset -1px 0 0 #efefef;"></div>
<div style="left:885px;top:2px;width:8.5px;height:331.5px;background:#0fb8c9;border-radius:4.500px;"></div>
<svg style="left:860px;top:-1.5999999999999943px;" width="9.5" height="6.5" viewBox="0 0 9.500 6.500"><path d="M1 5.500 4.750 1.800 8.500 5.500" fill="none" stroke="#7a7a86" stroke-width="1.800"/></svg>
</div>
<div style="left:0px;top:0px;width:1600px;height:22px;background:rgba(0,0,0,0.33);"></div>
<div style="left:0px;top:748px;width:1600px;height:22px;background:rgba(0,0,0,0.33);"></div>
<div style="left:0px;top:22px;width:22px;height:726px;background:rgba(0,0,0,0.33);"></div>
<div style="left:1578px;top:22px;width:22px;height:726px;background:rgba(0,0,0,0.33);"></div>
<div style="left:22px;top:747px;width:1556px;height:1px;background:rgba(0,0,0,0.12);"></div>
<div style="left:22px;top:22px;width:1px;height:725px;background:rgba(0,0,0,0.15);"></div>
<svg style="left:8px;top:741px;" width="31" height="30" viewBox="0 0 31 30">
<defs><linearGradient id="cyg" x1="0.2" y1="0" x2="0.9" y2="1"><stop offset="0" stop-color="#2fd896"/><stop offset="0.55" stop-color="#1fa971"/><stop offset="1" stop-color="#14623f"/></linearGradient></defs>
<circle cx="15.5" cy="15.2" r="13.7" fill="#141621" stroke="url(#cyg)" stroke-width="1.7"/>
</svg>
<span class="t" style="left:13.60px;top:743.80px;font-size:18.8px;line-height:24px;color:#d6d6d6;-webkit-text-stroke:0.3px #d6d6d6;letter-spacing:1.019px;">cy</span>
<div style="left:628px;top:0px;width:972px;height:1px;background:rgba(0,0,30,0.09);"></div>
</div>
</body></html>
